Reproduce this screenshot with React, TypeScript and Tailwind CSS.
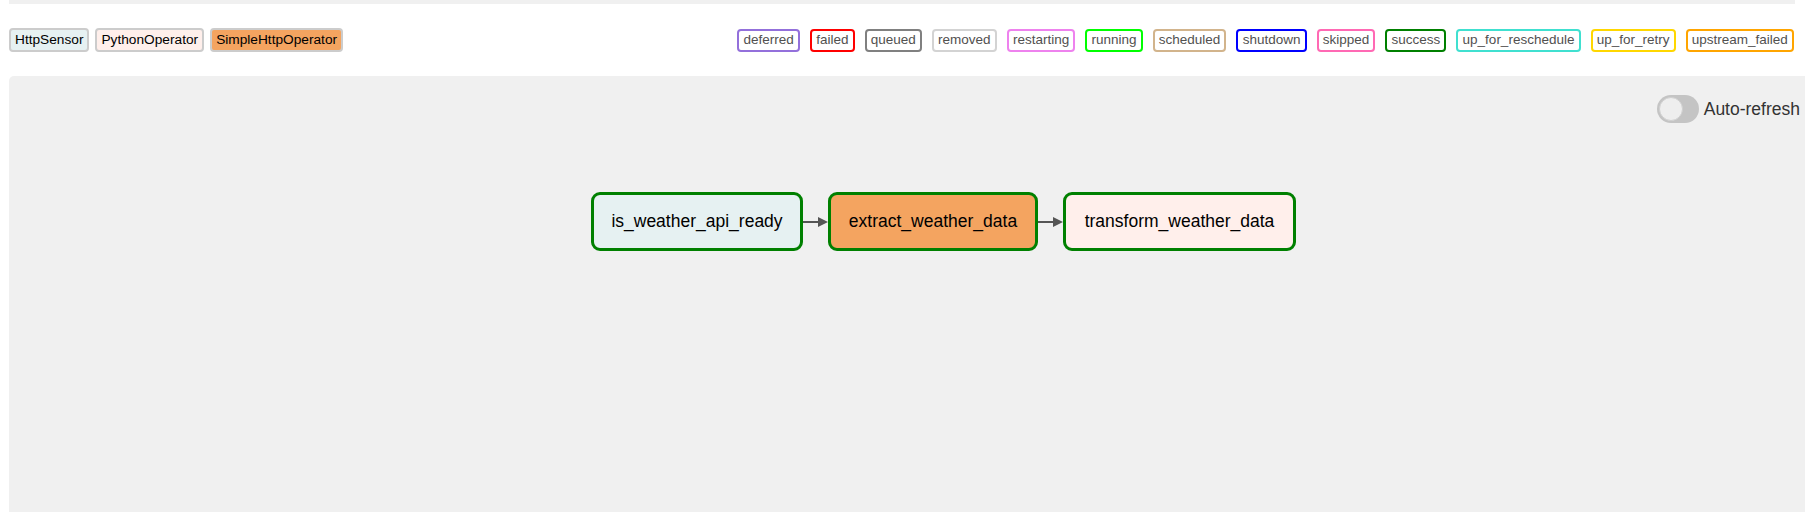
import React from 'react'

const operators = [
  { name: 'HttpSensor', bg: 'bg-[#e6f1f2]' },
  { name: 'PythonOperator', bg: 'bg-[#ffefeb]' },
  { name: 'SimpleHttpOperator', bg: 'bg-[#f4a460]' },
]

const states = [
  { name: 'deferred', border: 'border-[#9370db]' },
  { name: 'failed', border: 'border-[#ff0000]' },
  { name: 'queued', border: 'border-[#808080]' },
  { name: 'removed', border: 'border-[#d3d3d3]' },
  { name: 'restarting', border: 'border-[#ee82ee]' },
  { name: 'running', border: 'border-[#00ff00]' },
  { name: 'scheduled', border: 'border-[#d2b48c]' },
  { name: 'shutdown', border: 'border-[#0000ff]' },
  { name: 'skipped', border: 'border-[#ff69b4]' },
  { name: 'success', border: 'border-[#008000]' },
  { name: 'up_for_reschedule', border: 'border-[#40e0d0]' },
  { name: 'up_for_retry', border: 'border-[#ffd700]' },
  { name: 'upstream_failed', border: 'border-[#ffa500]' },
]

const tasks = [
  { id: 'is_weather_api_ready', bg: 'bg-[#e6f1f2]', w: 'w-[212px]' },
  { id: 'extract_weather_data', bg: 'bg-[#f4a460]', w: 'w-[210px]' },
  { id: 'transform_weather_data', bg: 'bg-[#ffefeb]', w: 'w-[233px]' },
]

function Edge() {
  return (
    <svg width="25" height="14" viewBox="0 0 25 14" className="shrink-0">
      <line x1="0" y1="7" x2="16" y2="7" stroke="#555555" strokeWidth="2" />
      <polygon points="15,2 25,7 15,12" fill="#555555" />
    </svg>
  )
}

export default function App() {
  return (
    <div className="bg-white min-h-[512px] pl-[9px] text-[#51504f]" style={{ fontFamily: '"Liberation Sans", Arial, sans-serif' }}>
      {/* top strip */}
      <div className="h-[4px] bg-[#f0f0f0] mr-[10px]" />

      {/* Legend */}
      <div className="h-[72px] flex items-center justify-between pr-[11px]">
        <div className="flex items-center gap-[6px]">
          {operators.map((op) => (
            <span
              key={op.name}
              className={`${op.bg} border-2 border-[#cccccc] rounded-[4px] h-[24px] px-[4px] flex items-center text-[13.7px] text-black`}
            >
              {op.name}
            </span>
          ))}
        </div>
        <div className="flex items-center gap-[10px]">
          {states.map((s) => (
            <span
              key={s.name}
              className={`${s.border} bg-white border-2 rounded-[4px] h-[23px] px-[4.15px] flex items-center text-[13.5px] text-[#51504f]`}
            >
              {s.name}
            </span>
          ))}
        </div>
      </div>

      {/* Graph canvas */}
      <div className="bg-[#f0f0f0] rounded-tl-[5px] h-[436px] flex flex-col">
        <div className="flex justify-end items-center pt-[19px] pr-[5px] gap-[5px]">
          <div className="w-[42px] h-[28px] rounded-full bg-[#c4c4c4] p-[2px] flex items-center">
            <div className="w-[24px] h-[24px] rounded-full bg-[#eeeeee] border border-[#d0d0d0]" />
          </div>
          <span className="text-[17.5px] text-[#333333]">Auto-refresh</span>
        </div>

        <div className="flex items-center pl-[582px] mt-[69px]">
          {tasks.map((t, i) => (
            <React.Fragment key={t.id}>
              {i > 0 && <Edge />}
              <div
                className={`${t.bg} ${t.w} h-[59px] border-[3px] border-[#008000] rounded-[9px] flex items-center justify-center text-[17.5px] text-black`}
              >
                {t.id}
              </div>
            </React.Fragment>
          ))}
        </div>
      </div>
    </div>
  )
}
